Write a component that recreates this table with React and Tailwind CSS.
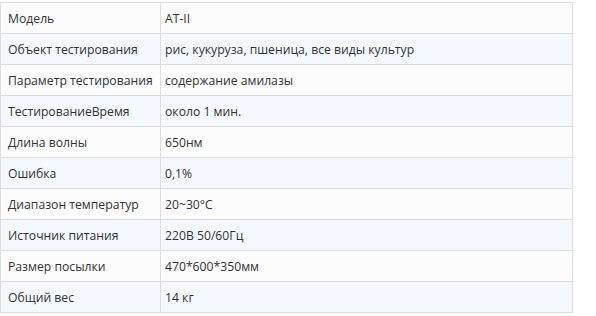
import React from "react";

const rows = [
  ["Модель", "AT-II"],
  ["Объект тестирования", "рис, кукуруза, пшеница, все виды культур"],
  ["Параметр тестирования", "содержание амилазы"],
  ["ТестированиеВремя", "около 1 мин."],
  ["Длина волны", "650нм"],
  ["Ошибка", "0,1%"],
  ["Диапазон температур", "20~30°C"],
  ["Источник питания", "220В 50/60Гц"],
  ["Размер посылки", "470*600*350мм"],
  ["Общий вес", "14 кг"],
];

export default function App() {
  return (
    <div className="w-[596px] h-[316px] bg-white pt-[2px]" style={{ fontFamily: '"Open Sans", "Noto Sans", sans-serif' }}>
      <div className="w-[573px] border-l border-t border-r border-[#dddddd] text-[12.2px] text-[#333333]">
        {rows.map(([a, b], i) => (
          <div
            key={i}
            className={`flex h-[31px] border-b border-[#dddddd] ${i % 2 === 1 ? "bg-[#f5f9ff]" : "bg-[#fcfcfc]"}`}
          >
            <div className="w-[160px] shrink-0 border-r border-[#dddddd] pl-[7px] pt-[2px] flex items-center whitespace-nowrap">
              {a}
            </div>
            <div className="flex-1 pl-[4px] pt-[2px] flex items-center whitespace-nowrap">{b}</div>
          </div>
        ))}
      </div>
    </div>
  );
}
